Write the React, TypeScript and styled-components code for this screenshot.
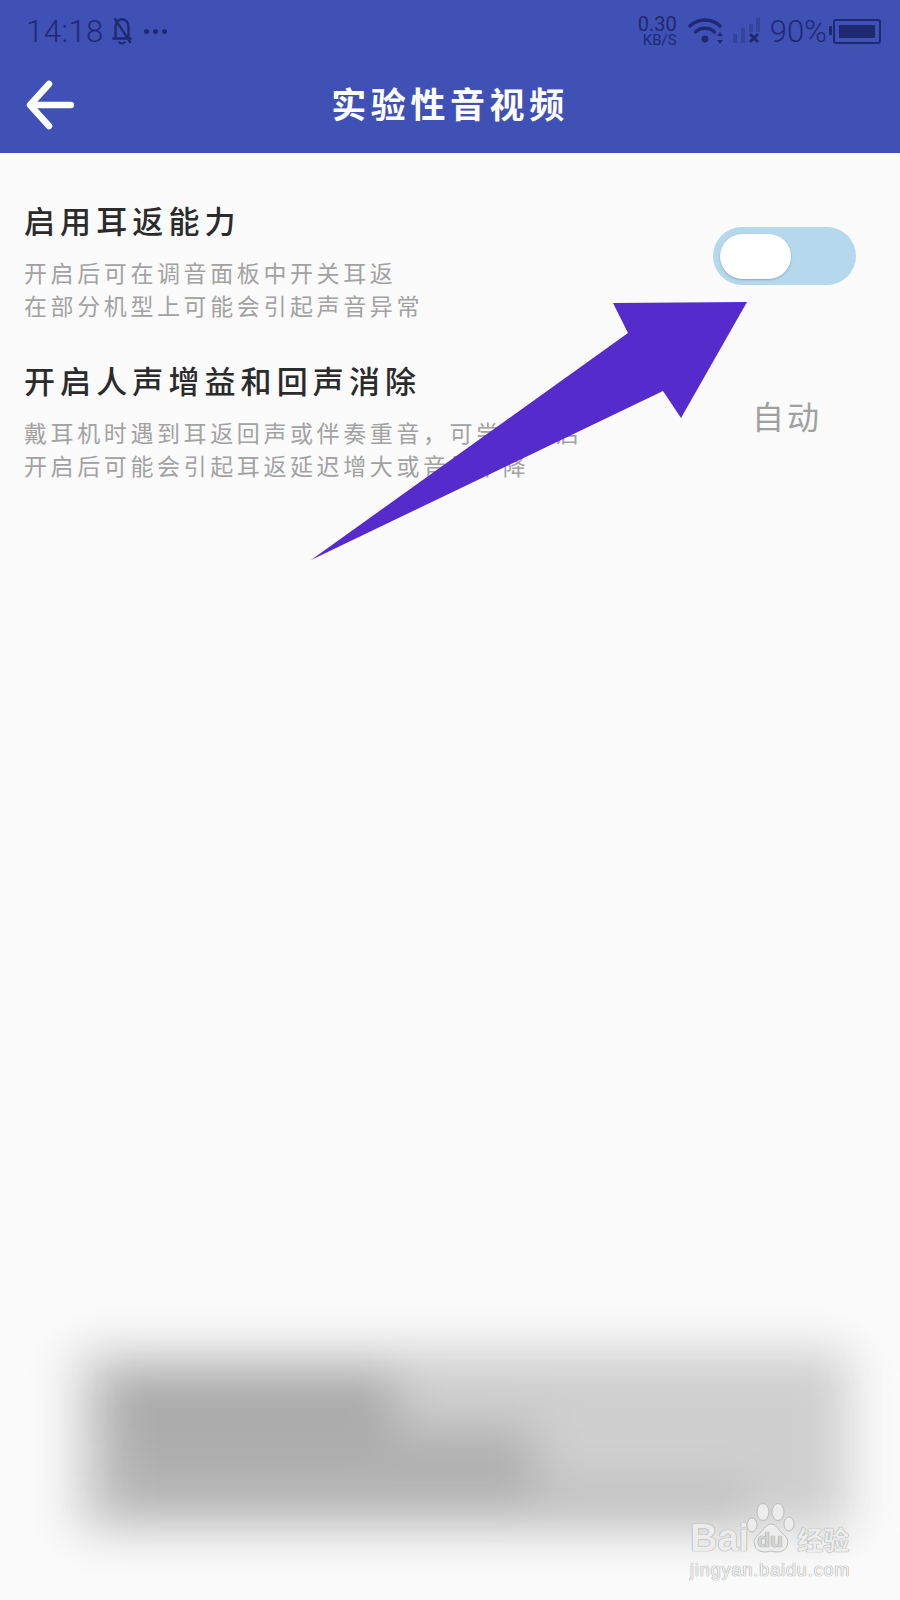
import styled, { createGlobalStyle } from "styled-components";

const GlobalStyle = createGlobalStyle`
  html, body {
    margin: 0;
    padding: 0;
    background: #fbfbfb;
  }
  * {
    box-sizing: border-box;
  }
`;

const CJK = `"Noto Sans CJK SC", "Liberation Sans", sans-serif`;
const STATUS_INK = "#1e2a70";

export default function App() {
  return (
    <Page>
      <GlobalStyle />
      <Header>
        <StatusBar>
          <StatusLeft>
            <Clock>14:18</Clock>
            <BellIcon />
            <Dots>
              <Dot />
              <Dot />
              <Dot />
            </Dots>
          </StatusLeft>
          <StatusRight>
            <Speed>
              <SpeedValue>0.30</SpeedValue>
              <SpeedUnit>KB/S</SpeedUnit>
            </Speed>
            <WifiIcon />
            <SignalIcon />
            <BatteryText>90%</BatteryText>
            <Battery>
              <BatteryLevel />
            </Battery>
          </StatusRight>
        </StatusBar>
        <TitleBar>
          <BackIcon />
          <Title>实验性音视频</Title>
        </TitleBar>
      </Header>

      <Settings>
        <Row>
          <RowText>
            <RowTitle>启用耳返能力</RowTitle>
            <RowDesc>
              开启后可在调音面板中开关耳返
              <br />
              在部分机型上可能会引起声音异常
            </RowDesc>
          </RowText>
          <Toggle>
            <Knob />
          </Toggle>
        </Row>
        <Row>
          <RowText>
            <RowTitle>开启人声增益和回声消除</RowTitle>
            <RowDesc>
              戴耳机时遇到耳返回声或伴奏重音，可尝试开启
              <br />
              开启后可能会引起耳返延迟增大或音量下降
            </RowDesc>
          </RowText>
          <AutoValue>自动</AutoValue>
        </Row>
      </Settings>

      <BlurredPanel>
        <BlurBlock $width={285} $height={55} $shade="#a9a9a9" />
        <BlurBlock $width={425} $height={60} $shade="#afafaf" />
        <BlurBlock $width={640} $height={30} $shade="#b8b8b8" />
      </BlurredPanel>

      <ArrowOverlay viewBox="0 0 900 1600">
        <polygon
          points="747,302 613,303 628,333 311,560 663,391 681,418"
          fill="#552ccb"
        />
      </ArrowOverlay>

      <Watermark>
        <WatermarkLogo>
          <WatermarkBrand>Bai</WatermarkBrand>
          <WatermarkPaw>
            <PawIcon />
            <PawText>du</PawText>
          </WatermarkPaw>
          <WatermarkCn>经验</WatermarkCn>
        </WatermarkLogo>
        <WatermarkUrl>jingyan.baidu.com</WatermarkUrl>
      </Watermark>
    </Page>
  );
}

function BellIcon() {
  return (
    <svg width="24" height="30" viewBox="0 0 22 28" fill="none" stroke={STATUS_INK} strokeWidth="2.2">
      <path d="M5 20V10c0-4 2.5-7 6-7s6 3 6 7v10" />
      <path d="M2 21h18M8 24c1 2 5 2 6 0M4 2l15 23" />
    </svg>
  );
}

function WifiIcon() {
  return (
    <svg width="36" height="30" viewBox="0 0 36 30" fill="none">
      <path d="M2 10c8-8 22-8 30 0" stroke={STATUS_INK} strokeWidth="3.4" strokeLinecap="round" />
      <path d="M7.5 16c5-5 14-5 19 0" stroke={STATUS_INK} strokeWidth="3.4" strokeLinecap="round" />
      <circle cx="17" cy="23" r="3.4" fill={STATUS_INK} />
      <path d="M32 16l-3 4h6zM32 28l-3-4h6z" fill={STATUS_INK} />
    </svg>
  );
}

function SignalIcon() {
  return (
    <svg width="28" height="26" viewBox="0 0 28 26" fill="none">
      <rect x="0" y="16" width="4" height="9" fill="#33449c" />
      <rect x="8" y="10" width="4" height="15" fill="#33449c" />
      <rect x="16" y="6" width="4" height="8" fill="#33449c" />
      <rect x="23" y="0" width="4" height="14" fill="#33449c" />
      <path d="M17 16l8 8M25 16l-8 8" stroke={STATUS_INK} strokeWidth="3" />
    </svg>
  );
}

function BackIcon() {
  return (
    <svg width="48" height="50" viewBox="0 0 48 50" fill="none" stroke="#ffffff" strokeWidth="6.5" strokeLinecap="round" strokeLinejoin="round">
      <path d="M23 4L4 25l19 21M5 25h40" />
    </svg>
  );
}

function PawIcon() {
  return (
    <svg width="50" height="52" viewBox="0 0 50 52" fill="#ececec" stroke="#bdbdbd" strokeWidth="1">
      <ellipse cx="6" cy="22" rx="5" ry="7" />
      <ellipse cx="17" cy="9" rx="6" ry="8.5" />
      <ellipse cx="32" cy="9" rx="6" ry="8.5" />
      <ellipse cx="43" cy="21" rx="5" ry="7" />
      <path d="M25 21c-5 0-7 5-11 9-5 4-7 8-5 13 2 6 9 7 16 5 7 2 14 1 16-5 2-5 0-9-5-13-4-4-6-9-11-9z" />
    </svg>
  );
}

const Page = styled.div`
  position: relative;
  display: flex;
  flex-direction: column;
  width: 900px;
  height: 1600px;
  overflow: hidden;
  background: #fbfbfb;
  font-family: ${CJK};
`;

const Header = styled.header`
  height: 153px;
  background: #3f51b5;
`;

const StatusBar = styled.div`
  display: flex;
  justify-content: space-between;
  align-items: center;
  height: 62px;
  padding: 0 19px 0 26px;
  color: ${STATUS_INK};
`;

const StatusLeft = styled.div`
  display: flex;
  align-items: center;
  gap: 6px;
`;

const Clock = styled.span`
  font-family: Roboto, sans-serif;
  font-size: 31px;
  font-weight: 300;
  letter-spacing: 0.5px;
`;

const Dots = styled.div`
  display: flex;
  gap: 4px;
  margin-left: 4px;
`;

const Dot = styled.span`
  width: 5px;
  height: 5px;
  border-radius: 50%;
  background: ${STATUS_INK};
`;

const StatusRight = styled.div`
  display: flex;
  align-items: center;
  gap: 9px;
`;

const Speed = styled.div`
  display: flex;
  flex-direction: column;
  align-items: flex-end;
  font-family: Roboto, sans-serif;
  margin-right: 2px;
`;

const SpeedValue = styled.span`
  font-size: 20px;
  line-height: 18px;
`;

const SpeedUnit = styled.span`
  font-size: 15px;
  line-height: 15px;
`;

const BatteryText = styled.span`
  font-family: Roboto, sans-serif;
  font-size: 31px;
  font-weight: 300;
  margin-right: -3px;
`;

const Battery = styled.div`
  position: relative;
  width: 48px;
  height: 25px;
  padding: 4px;
  border: 2.5px solid ${STATUS_INK};
  border-radius: 3px;

  &::before {
    content: "";
    position: absolute;
    left: -6px;
    top: 5px;
    width: 3px;
    height: 9px;
    background: ${STATUS_INK};
  }
`;

const BatteryLevel = styled.div`
  width: 100%;
  height: 100%;
  background: ${STATUS_INK};
`;

const TitleBar = styled.div`
  position: relative;
  display: flex;
  align-items: center;
  justify-content: center;
  height: 91px;
  padding-bottom: 11px;

  & > svg {
    position: absolute;
    left: 26px;
    top: 18px;
  }
`;

const Title = styled.h1`
  margin: 0;
  color: #ffffff;
  font-size: 35px;
  font-weight: 700;
  letter-spacing: 4.6px;
`;

const Settings = styled.main`
  display: flex;
  flex-direction: column;
  gap: 36px;
  padding: 45px 44px 0 24px;
`;

const Row = styled.section`
  display: flex;
  justify-content: space-between;
  align-items: flex-start;
`;

const RowText = styled.div`
  display: flex;
  flex-direction: column;
  gap: 14px;
`;

const RowTitle = styled.div`
  color: #2b2b2b;
  font-size: 31px;
  font-weight: 500;
  line-height: 44px;
  letter-spacing: 5.1px;
`;

const RowDesc = styled.div`
  color: #a2a2a2;
  font-size: 23px;
  line-height: 33px;
  letter-spacing: 3.6px;
`;

const Toggle = styled.div`
  display: flex;
  align-items: center;
  width: 143px;
  height: 58px;
  margin-top: 29px;
  padding-left: 7px;
  border-radius: 29px;
  background: #b5d8ec;
`;

const Knob = styled.div`
  width: 71px;
  height: 45px;
  border-radius: 23px;
  background: #ffffff;
  box-shadow: 0 1px 2px rgba(80, 110, 130, 0.45);
`;

const AutoValue = styled.div`
  margin-top: 35px;
  margin-right: 34px;
  color: #a0a0a0;
  font-size: 32px;
  line-height: 44px;
  letter-spacing: 3px;
`;

const BlurredPanel = styled.div`
  display: flex;
  flex-direction: column;
  width: 775px;
  height: 182px;
  margin: auto 0 68px 75px;
  padding: 24px 0 0 35px;
  background: #cfcfcf;
  filter: blur(24px);
`;

const BlurBlock = styled.div<{ $width: number; $height: number; $shade: string }>`
  width: ${(p) => p.$width}px;
  height: ${(p) => p.$height}px;
  background: ${(p) => p.$shade};
`;

const ArrowOverlay = styled.svg`
  position: absolute;
  inset: 0;
  width: 900px;
  height: 1600px;
  pointer-events: none;
`;

const Watermark = styled.div`
  position: absolute;
  left: 690px;
  top: 1503px;
  display: flex;
  flex-direction: column;
  gap: 3px;
  color: #ececec;
  text-shadow: 0 0 1px #9a9a9a, 0 0 1px #9a9a9a;
`;

const WatermarkLogo = styled.div`
  display: flex;
  align-items: flex-end;
  height: 52px;
`;

const WatermarkBrand = styled.span`
  font-family: "Liberation Sans", sans-serif;
  font-size: 38px;
  font-weight: 700;
  line-height: 34px;
`;

const WatermarkPaw = styled.div`
  position: relative;
  display: flex;
  width: 50px;
  height: 52px;
  margin-left: -3px;
`;

const PawText = styled.span`
  position: absolute;
  left: 11px;
  bottom: 3px;
  color: #d4d4d4;
  font-family: "Liberation Sans", sans-serif;
  font-size: 21px;
  font-weight: 700;
  line-height: 24px;
`;

const WatermarkCn = styled.span`
  margin-left: 1px;
  font-size: 26px;
  font-weight: 700;
  line-height: 32px;
`;

const WatermarkUrl = styled.span`
  color: #f2f2f2;
  font-family: "Liberation Sans", sans-serif;
  font-size: 18px;
  line-height: 24px;
  letter-spacing: 0.9px;
`;
